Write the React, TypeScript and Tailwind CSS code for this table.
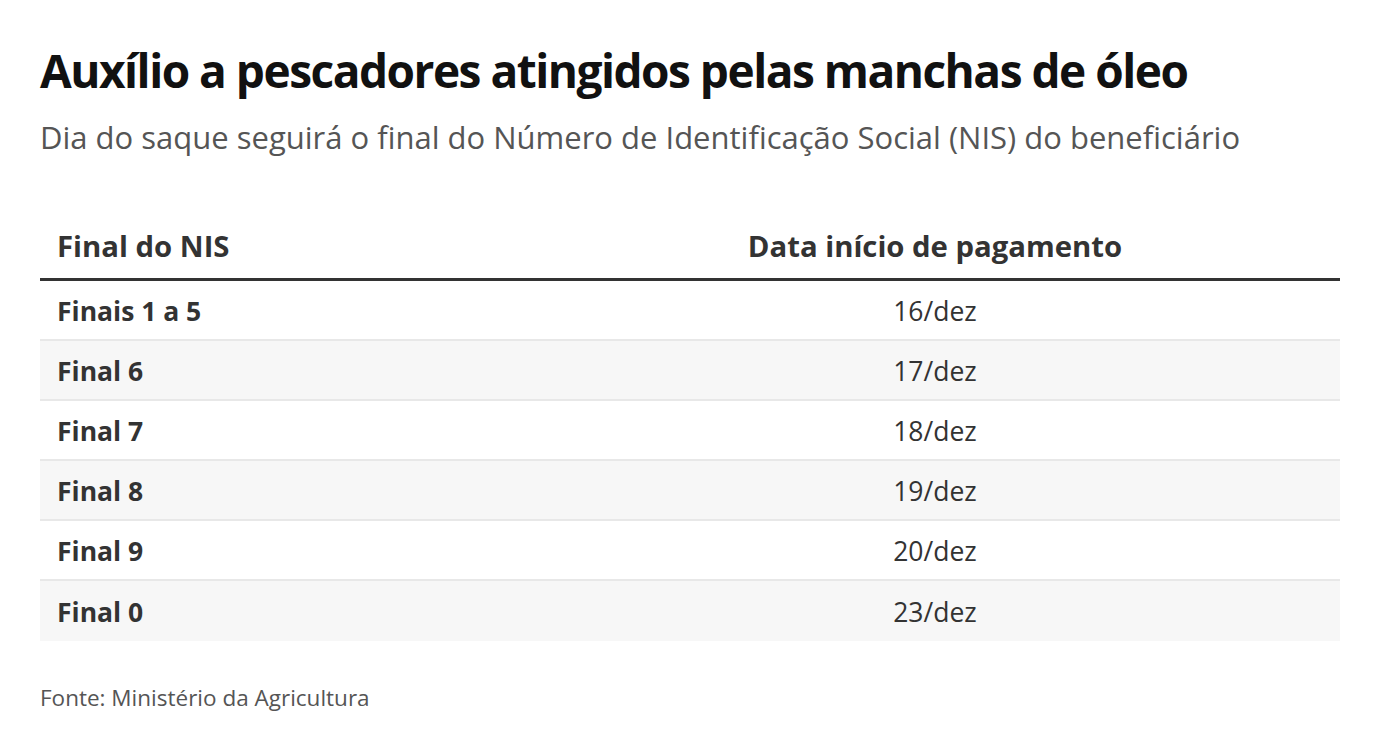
const rows = [
  { label: "Finais 1 a 5", date: "16/dez" },
  { label: "Final 6", date: "17/dez" },
  { label: "Final 7", date: "18/dez" },
  { label: "Final 8", date: "19/dez" },
  { label: "Final 9", date: "20/dez" },
  { label: "Final 0", date: "23/dez" },
];

export default function App() {
  return (
    <div className="min-h-screen bg-white px-10 pt-[40px] font-['Open_Sans',sans-serif]">
      <h1 className="text-[46px] font-bold leading-[60px] tracking-[-1.5px] text-[#111]">
        Auxílio a pescadores atingidos pelas manchas de óleo
      </h1>
      <p className="mt-[15px] text-[31px] leading-[44px] text-[#555]">
        Dia do saque seguirá o final do Número de Identificação Social (NIS) do beneficiário
      </p>

      <div className="mt-[57px] w-[1300px]">
        <div className="flex h-[65px] items-center border-b-[3px] border-[#333] text-[29.3px] font-bold text-[#333]">
          <div className="w-[490px] pl-[17px]">Final do NIS</div>
          <div className="flex-1 text-center">Data início de pagamento</div>
        </div>
        {rows.map((r, i) => (
          <div
            key={r.label}
            className={
              i % 2 === 1
                ? "flex h-[60px] items-center border-b-2 border-[#e8e8e8] bg-[#f7f7f7] pt-[3px] text-[26.5px] text-[#333] last:border-b-0"
                : "flex h-[60px] items-center border-b-2 border-[#e8e8e8] bg-white pt-[3px] text-[26.5px] text-[#333] last:border-b-0"
            }
          >
            <div className="w-[490px] pl-[17px] font-bold">{r.label}</div>
            <div className="flex-1 text-center">{r.date}</div>
          </div>
        ))}
      </div>

      <p className="mt-[41px] text-[22.5px] leading-[32px] text-[#555]">Fonte: Ministério da Agricultura</p>
    </div>
  );
}
